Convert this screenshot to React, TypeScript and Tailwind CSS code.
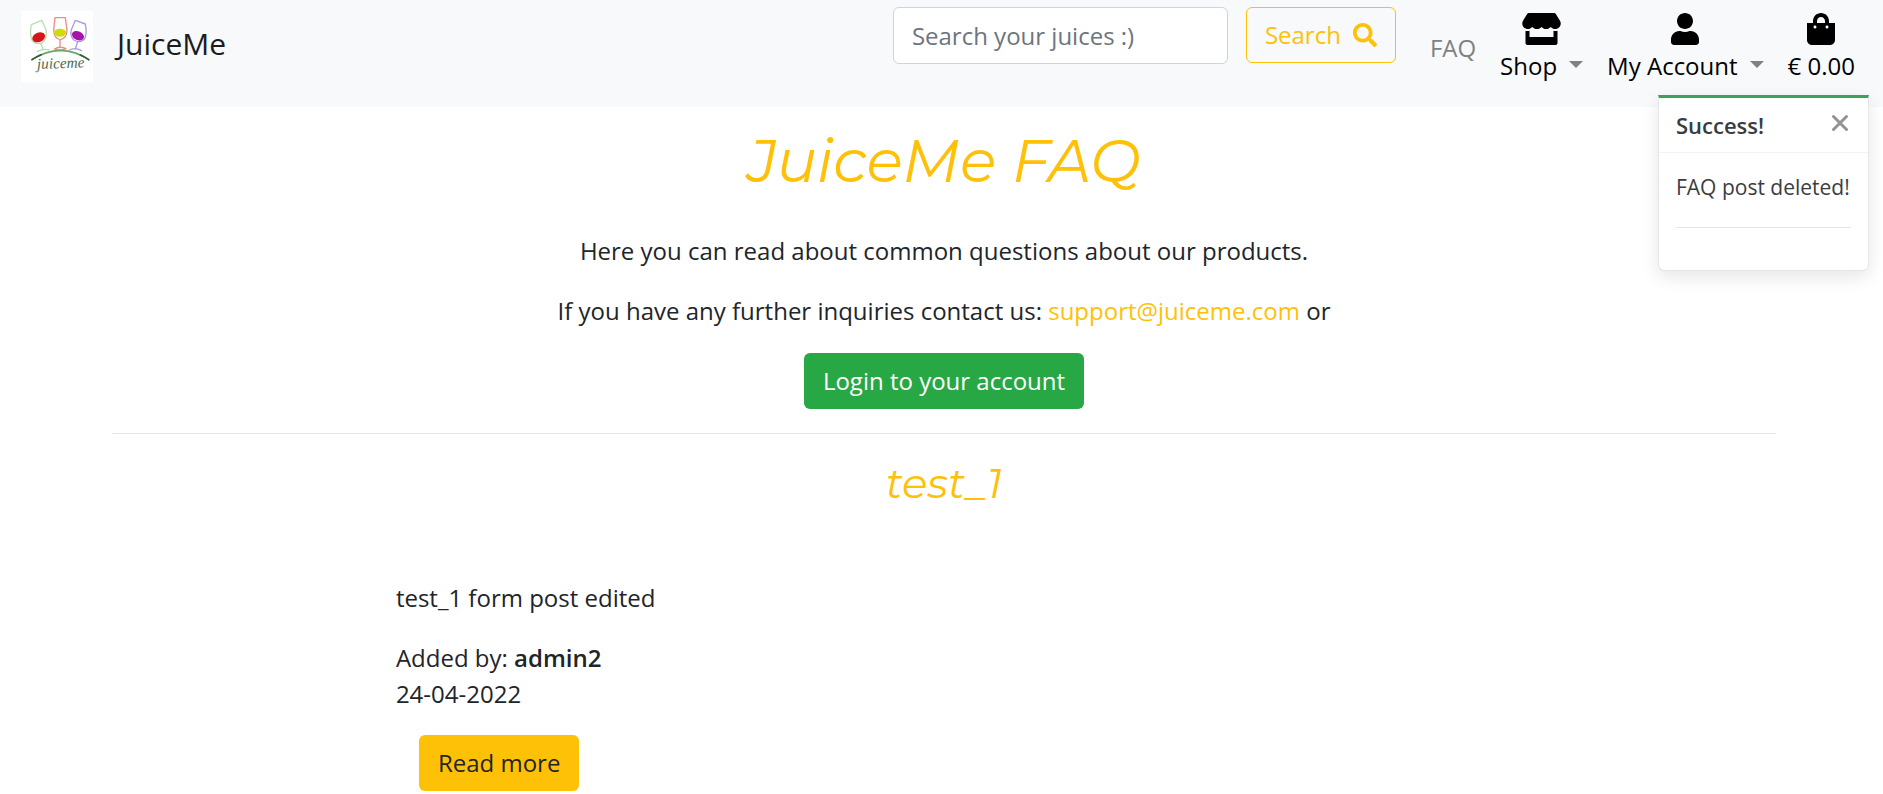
import { FaSearch, FaShoppingBag, FaStore, FaUser } from "react-icons/fa";

function Logo() {
  return (
    <svg viewBox="0 0 216 216" className="size-18 bg-white" role="img" aria-label="JuiceMe logo" fill="none" strokeLinecap="round" strokeLinejoin="round">
      <g stroke="#b9dfae" strokeWidth="4">
        <path d="M31 41 62 28 75 56Q80 84 63 96Q44 102 33 88Q25 70 31 41Z" />
        <path d="M59 97 67 117M49 122Q66 112 84 117" />
      </g>
      <ellipse cx="53" cy="79" rx="20" ry="14" transform="rotate(-22 53 79)" fill="#d5151b" />
      <g stroke="#f08a86" strokeWidth="4">
        <path d="M102 20H133L138 58Q137 83 118 86Q99 83 98 56Z" />
        <path d="M117 87V108M100 114Q117 104 135 113Q118 121 100 114Z" />
      </g>
      <ellipse cx="117" cy="65" rx="18" ry="12" fill="#cbdc08" />
      <g stroke="#a79be8" strokeWidth="4">
        <path d="M163 28 193 39Q199 70 190 85Q176 98 158 87Q146 74 151 56Z" />
        <path d="M170 92 163 114M146 117Q164 108 181 119" />
      </g>
      <ellipse cx="171" cy="74" rx="19" ry="13" transform="rotate(24 171 74)" fill="#a912ad" />
      <path d="M33 146Q75 119 118 118Q164 119 203 146" stroke="#69a765" strokeWidth="5" />
      <path d="M33 146Q46 137 60 131M178 132Q192 138 203 146" stroke="#315b35" strokeWidth="5" />
      <text x="48" y="174" transform="rotate(-2 48 174)" fill="#4c6b4d" fontFamily="Liberation Serif, serif" fontStyle="italic" fontSize="46">juiceme</text>
    </svg>
  );
}

function Caret() {
  return (
    <svg viewBox="0 0 14 7" className="mb-1 h-[7px] w-[14px] text-[#808182]" aria-hidden="true">
      <path d="M0 0H14L7 7Z" fill="currentColor" />
    </svg>
  );
}

function Navbar() {
  return (
    <nav className="flex h-[107px] items-start bg-[#f8f9fa] pr-7 pl-[21px]">
      <a href="#home" className="mt-[11px] flex items-center gap-6 text-3xl text-[#1b1c1d]">
        <Logo />
        <span className="pb-1.5">JuiceMe</span>
      </a>
      <form className="mt-[7px] ml-auto flex gap-[18px]" onSubmit={(e) => e.preventDefault()}>
        <input
          type="search"
          aria-label="Search your juices"
          placeholder="Search your juices :)"
          className="h-[57px] w-[335px] rounded-md border border-[#ced4da] bg-white px-[18px] text-[#495057] placeholder:text-[#6c757d]"
        />
        <button type="submit" className="flex h-14 items-center gap-3 rounded-md border border-[#ffc107] px-[18px] text-[#ffc107]">
          Search
          <FaSearch />
        </button>
      </form>
      <ul className="ml-[34px] flex text-black">
        <li className="mt-[30px]">
          <a href="#faq" className="text-[#808182]">FAQ</a>
        </li>
        <li className="mt-[13px] ml-6">
          <button type="button" className="grid grid-cols-[auto_14px] items-center gap-x-3 gap-y-[3px]">
            <FaStore className="col-span-2 h-8 w-[39px] justify-self-center" />
            <span>Shop</span>
            <Caret />
          </button>
        </li>
        <li className="mt-[13px] ml-6">
          <button type="button" className="grid grid-cols-[auto_14px] items-center gap-x-3 gap-y-[3px]">
            <FaUser className="col-span-2 h-8 w-7 justify-self-center" />
            <span>My Account</span>
            <Caret />
          </button>
        </li>
        <li className="mt-[13px] ml-6">
          <a href="#bag" className="flex flex-col items-center gap-[3px]">
            <FaShoppingBag className="h-8 w-7" />
            <span>€ 0.00</span>
          </a>
        </li>
      </ul>
    </nav>
  );
}

function Toast() {
  return (
    <div role="alert" className="absolute top-[95px] right-[14px] w-[211px] rounded-b-md border border-t-3 border-black/10 border-t-[#3da156] bg-white text-[21px] text-[#3a3d40] shadow-[0_6px_18px_rgba(0,0,0,0.1)]">
      <div className="flex h-[55px] items-center justify-between border-b border-black/5 pr-5 pl-[17px]">
        <strong className="text-[22px] font-semibold">Success!</strong>
        <button type="button" aria-label="Close" className="pb-1">
          <svg viewBox="0 0 16 16" className="size-4 overflow-visible" stroke="#929394" strokeWidth="3" strokeLinecap="round">
            <path d="M1.5 1.5 14.5 14.5M14.5 1.5 1.5 14.5" />
          </svg>
        </button>
      </div>
      <div className="px-[17px] pt-[18px] pb-[42px]">
        <p className="leading-8 whitespace-nowrap">FAQ post deleted!</p>
        <hr className="mt-6 border-black/10" />
      </div>
    </div>
  );
}

export default function App() {
  return (
    <div className="relative font-['Open_Sans','Noto_Sans',sans-serif] text-2xl leading-9 text-[#212529]">
      <Navbar />
      <Toast />
      <main className="pr-[107px] pl-[112px]">
        <section className="flex flex-col items-center border-b border-black/10 pt-[18px] pb-6 text-center">
          <h1 className="mb-9 font-['Montserrat','Inter',sans-serif] text-6xl leading-[72px] text-[#ffc107] italic">JuiceMe FAQ</h1>
          <p className="mb-6">Here you can read about common questions about our products.</p>
          <p className="mb-6">
            If you have any further inquiries contact us:{" "}
            <a href="mailto:support@juiceme.com" className="text-[#ffc107]">support@juiceme.com</a> or
          </p>
          <a href="#login" className="rounded-md bg-[#28a745] px-[19px] py-[10px] text-white">Login to your account</a>
        </section>
        <article className="pt-[22px]">
          <h2 className="text-center font-['Montserrat','Inter',sans-serif] text-[42px] leading-[54px] text-[#ffc107] italic">test_1</h2>
          <div className="ml-[17%] pt-[70px] pl-px">
            <p className="mb-6">test_1 form post edited</p>
            <p className="mb-[23px]">
              Added by: <strong className="font-semibold">admin2</strong>
              <br />
              24-04-2022
            </p>
            <a href="#post" className="ml-[23px] inline-block rounded-md bg-[#ffc107] px-[19px] py-[10px]">Read more</a>
          </div>
        </article>
      </main>
    </div>
  );
}
